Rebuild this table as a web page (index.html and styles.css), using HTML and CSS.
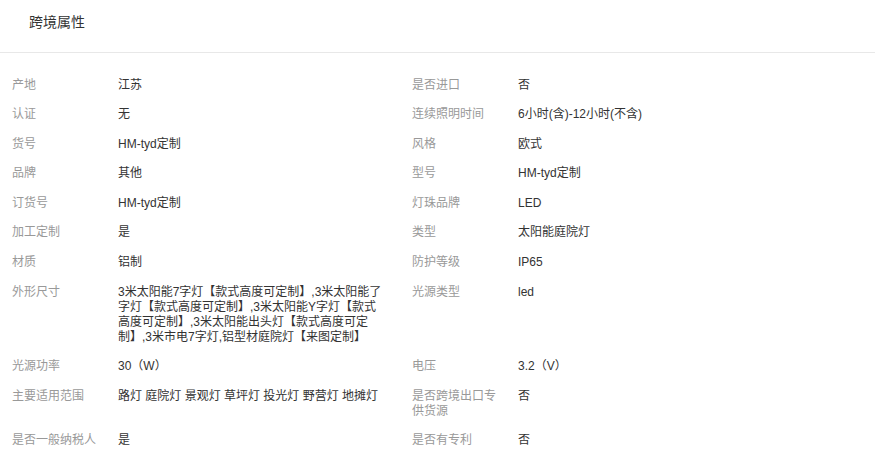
FILE: index.html
```html
<!DOCTYPE html>
<html lang="zh-CN">
<head>
    <meta charset="UTF-8">
    <meta name="viewport" content="width=device-width, initial-scale=1.0">
    <title>跨境属性</title>

    <link rel="stylesheet" href="styles.css">
</head>
<body>
    <div class="panel">
        <!-- Panel title -->
        <div class="panel-head">
            <h2 class="panel-title">跨境属性</h2>
        </div>

        <!-- Attribute list, two columns -->
        <div class="attr-list">
            <div class="attr"><span class="attr-name">产地</span><span class="attr-value">江苏</span></div>
            <div class="attr"><span class="attr-name">是否进口</span><span class="attr-value">否</span></div>

            <div class="attr"><span class="attr-name">认证</span><span class="attr-value">无</span></div>
            <div class="attr"><span class="attr-name">连续照明时间</span><span class="attr-value">6小时(含)-12小时(不含)</span></div>

            <div class="attr"><span class="attr-name">货号</span><span class="attr-value">HM-tyd定制</span></div>
            <div class="attr"><span class="attr-name">风格</span><span class="attr-value">欧式</span></div>

            <div class="attr"><span class="attr-name">品牌</span><span class="attr-value">其他</span></div>
            <div class="attr"><span class="attr-name">型号</span><span class="attr-value">HM-tyd定制</span></div>

            <div class="attr"><span class="attr-name">订货号</span><span class="attr-value">HM-tyd定制</span></div>
            <div class="attr"><span class="attr-name">灯珠品牌</span><span class="attr-value">LED</span></div>

            <div class="attr"><span class="attr-name">加工定制</span><span class="attr-value">是</span></div>
            <div class="attr"><span class="attr-name">类型</span><span class="attr-value">太阳能庭院灯</span></div>

            <div class="attr"><span class="attr-name">材质</span><span class="attr-value">铝制</span></div>
            <div class="attr"><span class="attr-name">防护等级</span><span class="attr-value">IP65</span></div>

            <div class="attr"><span class="attr-name">外形尺寸</span><span class="attr-value">3米太阳能7字灯【款式高度可定制】,3米太阳能了字灯【款式高度可定制】,3米太阳能Y字灯【款式高度可定制】,3米太阳能出头灯【款式高度可定制】,3米市电7字灯,铝型材庭院灯【来图定制】</span></div>
            <div class="attr"><span class="attr-name">光源类型</span><span class="attr-value">led</span></div>

            <div class="attr"><span class="attr-name">光源功率</span><span class="attr-value">30（W）</span></div>
            <div class="attr"><span class="attr-name">电压</span><span class="attr-value">3.2（V）</span></div>

            <div class="attr"><span class="attr-name">主要适用范围</span><span class="attr-value">路灯 庭院灯 景观灯 草坪灯 投光灯 野营灯 地摊灯</span></div>
            <div class="attr"><span class="attr-name">是否跨境出口专供货源</span><span class="attr-value">否</span></div>

            <div class="attr"><span class="attr-name">是否一般纳税人</span><span class="attr-value">是</span></div>
            <div class="attr"><span class="attr-name">是否有专利</span><span class="attr-value">否</span></div>
        </div>
    </div>
</body>
</html>
```

FILE: styles.css
```css
/* Page */
body {
    margin: 0;
    padding: 0;
    background-color: #fff;
    font-family: 'Liberation Sans', Arial, 'Noto Sans CJK SC', sans-serif;
    color: #333;
}

.panel {
    width: 875px;
}

/* Title bar */
.panel-head {
    padding: 12px 0 20px 29px;
    border-bottom: 1px solid #e8e8e8;
}

.panel-title {
    margin: 0;
    font-size: 14px;
    font-weight: normal;
    line-height: 20px;
    color: #333;
}

/* Attribute grid */
.attr-list {
    display: grid;
    grid-template-columns: 400px 400px;
    padding: 17.5px 0 0 12px;
}

.attr {
    display: flex;
    padding: 7px 0 7.6px;
    font-size: 12px;
    line-height: 15px;
}

.attr-name {
    flex: none;
    width: 90px;
    padding-right: 16px;
    color: #999;
}

.attr-value {
    width: 268px;
    color: #333;
}
```
